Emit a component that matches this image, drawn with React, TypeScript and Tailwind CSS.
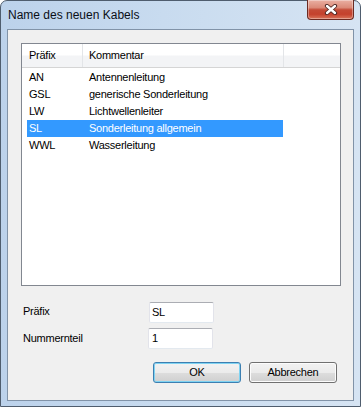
const rows: [string, string][] = [
  ["AN", "Antennenleitung"],
  ["GSL", "generische Sonderleitung"],
  ["LW", "Lichtwellenleiter"],
  ["SL", "Sonderleitung allgemein"],
  ["WWL", "Wasserleitung"],
];

function CloseGlyph() {
  return (
    <svg width="14" height="11" viewBox="0 0 14 11">
      <path d="M3 2 L11 9 M11 2 L3 9" stroke="#4a2420" strokeWidth="4.2" strokeLinecap="round" fill="none" />
      <path d="M3 2 L11 9 M11 2 L3 9" stroke="#ffffff" strokeWidth="2.4" strokeLinecap="round" fill="none" />
    </svg>
  );
}

export default function App() {
  return (
    <div className="w-[361px] h-[407px] font-['Liberation_Sans',Arial,sans-serif] text-[11px] text-black leading-none tracking-[-0.25px]">
      <div className="w-full h-full flex flex-col rounded-t-[7px] border border-[#4f5d6e] bg-[linear-gradient(90deg,#bcd2eb_0%,#c8dbef_45%,#d6e4f3_100%)]">
        {/* title bar */}
        <div className="h-[28px] flex items-start">
          <span className="pl-[7px] pt-[8px] text-[12px] tracking-normal text-[#0b0f17]">Name des neuen Kabels</span>
          <div className="ml-auto mr-[6px] mt-[-1px] w-[47px] h-[20px] rounded-b-[4px] border border-t-0 border-[#6b2a22] bg-[linear-gradient(180deg,#eab0a3_0%,#db8a78_40%,#c44a36_52%,#c4412d_75%,#d9745a_100%)] shadow-[inset_0_0_0_1px_rgba(255,255,255,0.35)] flex items-center justify-center">
            <CloseGlyph />
          </div>
        </div>
        {/* client */}
        <div className="mx-[6px] mb-[5px] flex-1 border border-[#8193a8] bg-[#f0f0f0] flex flex-col">
          {/* listview */}
          <div className="ml-[13px] mt-[13px] w-[320px] h-[243px] border border-[#828790] bg-white flex flex-col">
            <div className="h-[24px] flex border-b border-[#d5d5d5] bg-[linear-gradient(180deg,#ffffff_0%,#ffffff_48%,#f3f4f6_52%,#f3f4f6_100%)]">
              <div className="w-[61px] flex items-center pl-[7px] border-r border-[#e3e5e8]">Präfix</div>
              <div className="w-[201px] flex items-center pl-[6px] border-r border-[#e3e5e8]">Kommentar</div>
              <div className="flex-1" />
            </div>
            <div className="mt-[1px] flex flex-col">
              {rows.map(([p, k]) => {
                const sel = p === "SL";
                return (
                  <div
                    key={p}
                    className={
                      sel
                        ? "ml-[5px] w-[256px] h-[17px] flex items-center bg-[#3399ff] text-white"
                        : "ml-[5px] w-[256px] h-[17px] flex items-center"
                    }
                  >
                    <span className="w-[62px] pl-[2px]">{p}</span>
                    <span>{k}</span>
                  </div>
                );
              })}
            </div>
          </div>
          {/* form */}
          <div className="mt-[16px] flex items-start">
            <span className="ml-[15px] w-[126px] pt-[4px]">Präfix</span>
            <div className="w-[65px] h-[21px] rounded-[2px] border border-[#e2e3ea] border-t-[#abadb3] border-b-[#e3e9ef] bg-white flex items-center pl-[2px]">
              SL
            </div>
          </div>
          <div className="mt-[5px] flex items-center">
            <span className="ml-[15px] w-[125px]">Nummernteil</span>
            <div className="w-[65px] h-[21px] rounded-[2px] border border-[#e2e3ea] border-t-[#abadb3] border-b-[#e3e9ef] bg-white flex items-center pl-[3px]">
              1
            </div>
          </div>
          <div className="mt-[13px] flex">
            <button className="ml-[145px] w-[88px] h-[21px] rounded-[3px] border border-[#3c7fb1] shadow-[inset_0_0_0_1px_#7fd3f2] bg-[linear-gradient(180deg,#f2f2f2_0%,#ebebeb_50%,#dddddd_51%,#cfcfcf_100%)] flex items-center justify-center text-[11px] text-black">
              OK
            </button>
            <button className="ml-[8px] w-[88px] h-[21px] rounded-[3px] border border-[#707070] shadow-[inset_0_0_0_1px_#fcfcfc] bg-[linear-gradient(180deg,#f2f2f2_0%,#ebebeb_50%,#dddddd_51%,#cfcfcf_100%)] flex items-center justify-center text-[11px] text-black">
              Abbrechen
            </button>
          </div>
        </div>
      </div>
    </div>
  );
}
